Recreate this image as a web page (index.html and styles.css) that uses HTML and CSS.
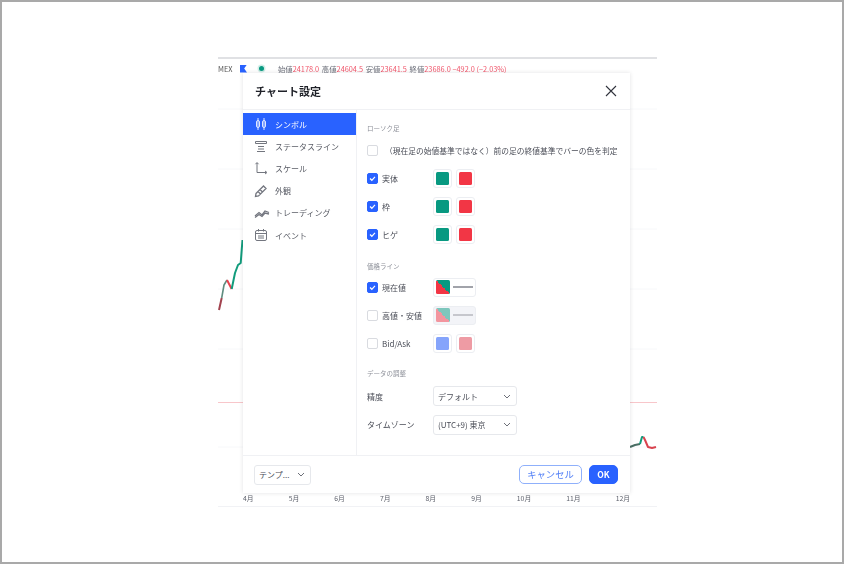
FILE: index.html
```html
<!DOCTYPE html>
<html lang="ja">
<head>
<meta charset="utf-8">
<title>チャート設定</title>
<link rel="stylesheet" href="styles.css">
</head>
<body>
<main class="frame">
  <section class="chart">
    <svg class="plot" width="439" height="450" viewBox="0 0 439 450" aria-hidden="true">
      <g stroke="#f7f8fa" stroke-width="1">
        <path d="M0 52H439M0 112H439M0 172H439M0 232H439M0 292H439M0 390H439"/>
      </g>
      <path d="M0 345.500H439" stroke="#f8c6ca"/>
      <path d="M0 0.500H439" stroke="#e0e1e4" stroke-width="3"/>
      <path d="M0 449.500H439" stroke="#f1f2f5"/>
      <g fill="none" stroke-width="2" stroke-linejoin="round">
        <path d="M1 253L3.700 241" stroke="#a2434f"/>
        <path d="M3.700 241L6 228L9 223" stroke="#5f8d80" stroke-width="1.600"/>
        <path d="M9 223L13.700 232" stroke="#e8414f"/>
        <path d="M13.700 232L17 216L20 208L22.700 206L23.700 193L24.500 183" stroke="#129c7c"/>
        <path d="M412 390L417 388L422 387" stroke="#4a6e64"/>
        <path d="M422 387L424 380L425.500 380" stroke="#129c7c"/>
        <path d="M425.500 380L427 383L430 390L434 391L438 390" stroke="#d9434f"/>
      </g>
    </svg>
    <div class="legend">
      <span class="legend-name">MEX</span>
      <span class="legend-flag"></span>
      <span class="legend-dot"></span>
      <span class="legend-values">
        <span>始値</span><em>24178.0</em>
        <span>高値</span><em>24604.5</em>
        <span>安値</span><em>23641.5</em>
        <span>終値</span><em>23686.0 −492.0 (−2.03%)</em>
      </span>
    </div>
    <div class="axis">
      <span>4月</span><span>5月</span><span>6月</span><span>7月</span><span>8月</span><span>9月</span><span>10月</span><span>11月</span><span>12月</span>
    </div>

    <div class="dialog">
      <header class="dialog-head">
        <h1>チャート設定</h1>
        <svg class="close" width="12" height="12" viewBox="0 0 12 12" aria-hidden="true"><path d="M1 1L11 11M11 1L1 11" stroke="#30333c" stroke-width="1.100" fill="none"/></svg>
      </header>
      <div class="dialog-body">
        <nav class="side">
          <a class="side-item is-active">
            <span class="side-icon"><svg width="14" height="14" viewBox="0 0 14 14" fill="none" stroke="currentColor"><path d="M4 1V13M10 1V13"/><rect x="2.500" y="3.500" width="3" height="7" rx="1.500"/><rect x="8.500" y="3.500" width="3" height="7" rx="1.500"/></svg></span>
            シンボル</a>
          <a class="side-item">
            <span class="side-icon"><svg width="14" height="14" viewBox="0 0 14 14" fill="none" stroke="currentColor"><path d="M1.500 2.500H12.500V4.500H1.500ZM4 7.500H10M4 10H10M3 12.500H11"/></svg></span>
            ステータスライン</a>
          <a class="side-item">
            <span class="side-icon"><svg width="14" height="14" viewBox="0 0 14 14" fill="none" stroke="currentColor"><path d="M3 2V11.500H12"/><path d="M1.500 3.200L3 1.500L4.500 3.200M11 10L13 11.500L11 13"/></svg></span>
            スケール</a>
          <a class="side-item">
            <span class="side-icon"><svg width="14" height="14" viewBox="0 0 14 14" fill="none" stroke="currentColor" stroke-width="1.300"><path d="M2 9.500L9.500 2L12 4.500L4.500 12L1.500 12.500ZM4 7.500L6.500 10M6 5.500L8.500 8"/></svg></span>
            外観</a>
          <a class="side-item">
            <span class="side-icon"><svg width="16" height="14" viewBox="0 0 16 14" fill="none" stroke="currentColor" stroke-width="1.300"><path d="M1 10L5 6.500L8 9L11 5L15 6.500"/><path d="M1 11.500L5 8.500L8 10.500L11 7L15 8"/></svg></span>
            トレーディング</a>
          <a class="side-item">
            <span class="side-icon"><svg width="14" height="14" viewBox="0 0 14 14" fill="none" stroke="currentColor"><rect x="1.500" y="2.500" width="11" height="10" rx="1.500"/><path d="M1.500 5.500H12.500M4.500 1V3.500M9.500 1V3.500M5 7V11M9 7V11M7 7V11"/></svg></span>
            イベント</a>
        </nav>
        <div class="panel">
          <h2 class="section first">ローソク足</h2>
          <div class="row row-wide">
            <span class="check"></span>
            <span class="row-text">（現在足の始値基準ではなく）前の足の終値基準でバーの色を判定</span>
          </div>
          <div class="row">
            <span class="check on"><svg viewBox="0 0 11 11"><path d="M2.500 5.500L4.700 7.700L8.500 3.500"/></svg></span>
            <span class="row-label">実体</span>
            <span class="swatch"><i class="green"></i></span><span class="swatch"><i class="red"></i></span>
          </div>
          <div class="row">
            <span class="check on"><svg viewBox="0 0 11 11"><path d="M2.500 5.500L4.700 7.700L8.500 3.500"/></svg></span>
            <span class="row-label">枠</span>
            <span class="swatch"><i class="green"></i></span><span class="swatch"><i class="red"></i></span>
          </div>
          <div class="row">
            <span class="check on"><svg viewBox="0 0 11 11"><path d="M2.500 5.500L4.700 7.700L8.500 3.500"/></svg></span>
            <span class="row-label">ヒゲ</span>
            <span class="swatch"><i class="green"></i></span><span class="swatch"><i class="red"></i></span>
          </div>

          <h2 class="section second">価格ライン</h2>
          <div class="row">
            <span class="check on"><svg viewBox="0 0 11 11"><path d="M2.500 5.500L4.700 7.700L8.500 3.500"/></svg></span>
            <span class="row-label">現在値</span>
            <span class="swatch wide"><i class="split"></i><b class="dash"></b></span>
          </div>
          <div class="row">
            <span class="check"></span>
            <span class="row-label">高値・安値</span>
            <span class="swatch wide muted"><i class="split faded"></i><b class="dash faded"></b></span>
          </div>
          <div class="row">
            <span class="check"></span>
            <span class="row-label">Bid/Ask</span>
            <span class="swatch"><i class="blue"></i></span><span class="swatch"><i class="pink"></i></span>
          </div>

          <h2 class="section third">データの調整</h2>
          <div class="field">
            <span class="field-label">精度</span>
            <span class="select">デフォルト<svg width="8" height="5" viewBox="0 0 8 5"><path d="M1 1L4 4L7 1"/></svg></span>
          </div>
          <div class="field">
            <span class="field-label">タイムゾーン</span>
            <span class="select">(UTC+9) 東京<svg width="8" height="5" viewBox="0 0 8 5"><path d="M1 1L4 4L7 1"/></svg></span>
          </div>
        </div>
      </div>
      <footer class="dialog-foot">
        <span class="select select-template">テンプ...<svg width="8" height="5" viewBox="0 0 8 5"><path d="M1 1L4 4L7 1"/></svg></span>
        <span class="actions">
          <button class="btn btn-ghost" type="button">キャンセル</button>
          <button class="btn btn-primary" type="button">OK</button>
        </span>
      </footer>
    </div>
  </section>
</main>
</body>
</html>
```

FILE: styles.css
```css
* { box-sizing: border-box; }
html, body { margin: 0; padding: 0; }
body {
  width: 844px;
  height: 564px;
  background: #fff;
  font-family: "Noto Sans CJK JP", "Noto Sans", sans-serif;
  color: #4a4d57;
  overflow: hidden;
}
.frame {
  width: 844px;
  height: 564px;
  border: 2px solid #a9a9a9;
  padding: 55px 185px 0 216px;
}
.chart {
  position: relative;
  width: 439px;
  height: 450px;
  filter: blur(0.5px);
}
.plot { position: absolute; left: 0; top: 0; }
.legend {
  position: absolute;
  left: 0;
  top: 6px;
  display: flex;
  align-items: center;
  height: 11px;
  font-size: 7.350px;
  white-space: nowrap;
}
.legend-name { color: #555; width: 22px; }
.legend-flag {
  width: 7px;
  height: 8px;
  background: #2962ff;
  clip-path: polygon(0 0, 100% 0, 60% 50%, 100% 100%, 0 100%);
  margin-right: 12px;
}
.legend-dot {
  width: 5px;
  height: 5px;
  border-radius: 50%;
  background: #089981;
  box-shadow: 0 0 0 1.500px #d3eee8;
  margin-right: 14px;
}
.legend-values span { color: #6a6d78; }
.legend-values em { font-style: normal; color: #f0556a; margin-right: 1px; }

.axis {
  position: absolute;
  left: 25px;
  top: 435px;
  width: 387px;
  display: flex;
  justify-content: space-between;
  font-size: 6.800px;
  line-height: 12px;
  color: #5d606b;
}

.dialog {
  position: absolute;
  left: 25px;
  top: 16px;
  width: 387px;
  height: 420px;
  background: #fff;
  box-shadow: 0 0 4px rgba(40, 45, 60, 0.14);
  display: flex;
  flex-direction: column;
}
.dialog-head {
  height: 37px;
  flex: none;
  display: flex;
  align-items: center;
  justify-content: space-between;
  padding: 0 13px 1px 12px;
  border-bottom: 1px solid #f0f1f4;
}
.dialog-head h1 {
  margin: 0;
  font-size: 11px;
  font-weight: 700;
  color: #1f2128;
}
.close { margin-top: 1px; }
.dialog-body {
  flex: 1;
  display: flex;
  min-height: 0;
}
.side {
  width: 114px;
  flex: none;
  padding-top: 3px;
  border-right: 1px solid #f0f1f4;
}
.side-item {
  height: 22.200px;
  display: flex;
  align-items: center;
  padding-left: 11px;
  font-size: 8px;
  color: #5a5d66;
}
.side-icon {
  width: 21px;
  flex: none;
  display: flex;
  color: #73767f;
}
.side-item.is-active { background: #2962ff; color: #fff; }
.is-active .side-icon { color: #dfe7ff; }
.panel {
  flex: 1;
  padding: 0 0 0 10px;
}
.section {
  margin: 0;
  font-size: 6.500px;
  font-weight: 400;
  line-height: 10px;
  color: #8d9099;
}
.section.first { margin-top: 13px; margin-bottom: 6px; }
.section.second { margin-top: 13px; margin-bottom: 2px; }
.section.third { margin-top: 11px; margin-bottom: 4px; }
.row {
  height: 28px;
  display: flex;
  align-items: center;
  font-size: 8px;
  color: #4a4d57;
}
.row-wide { height: 22px; margin-bottom: 3px; }
.row-text { margin-left: 7px; white-space: nowrap; font-size: 7.750px; }
.row-label { width: 55px; padding-left: 4px; white-space: nowrap; }
.check {
  width: 11px;
  height: 11px;
  flex: none;
  border: 1px solid #d9dbe0;
  border-radius: 2px;
  background: #fff;
}
.check.on { background: #2962ff; border-color: #2962ff; }
.check svg { display: block; width: 9px; height: 9px; fill: none; stroke: #fff; stroke-width: 1.500; }
.swatch {
  width: 19px;
  height: 19px;
  flex: none;
  margin-right: 4px;
  padding: 2px;
  border: 1px solid #eceef2;
  border-radius: 3px;
  display: flex;
  align-items: center;
  background: #fff;
}
.swatch i { display: block; width: 100%; height: 100%; border-radius: 1.500px; }
.swatch.wide { width: 43px; margin-right: 0; gap: 3px; }
.swatch.wide i { width: 14px; height: 14px; flex: none; }
.swatch.muted { background: #f3f4f8; }
.green { background: #089981; }
.red { background: #f23645; }
.blue { background: #85a4fb; }
.pink { background: #ee9ba4; }
.split { background: linear-gradient(45deg, #f23645 50%, #089981 50%); }
.split.faded { opacity: 0.5; }
.dash { display: block; flex: 1; height: 1.500px; background: #a1a3aa; }
.dash.faded { opacity: 0.55; }

.field {
  height: 28.500px;
  display: flex;
  align-items: center;
}
.field-label { width: 66px; font-size: 8px; color: #4a4d57; }
.select {
  width: 84px;
  height: 20px;
  display: flex;
  align-items: center;
  justify-content: space-between;
  padding: 0 5px 0 4px;
  border: 1px solid #e6e8ec;
  border-radius: 3px;
  font-size: 8px;
  color: #4a4d57;
  background: #fff;
}
.select svg { fill: none; stroke: #6d7079; stroke-width: 1; flex: none; }

.dialog-foot {
  height: 38px;
  flex: none;
  display: flex;
  align-items: center;
  justify-content: space-between;
  padding: 0 12px 0 11px;
  border-top: 1px solid #f0f1f4;
}
.select-template { width: 57px; }
.actions { display: flex; gap: 7px; }
.btn {
  height: 19px;
  padding: 0;
  border-radius: 5px;
  font-family: inherit;
  font-size: 8.500px;
  line-height: 1;
}
.btn-ghost { width: 63px; background: #fff; border: 1px solid #8fb0fb; color: #4d7cf6; font-size: 9.300px; }
.btn-primary { width: 29px; background: #2962ff; border: 1px solid #2962ff; color: #fff; font-weight: 700; }
```
